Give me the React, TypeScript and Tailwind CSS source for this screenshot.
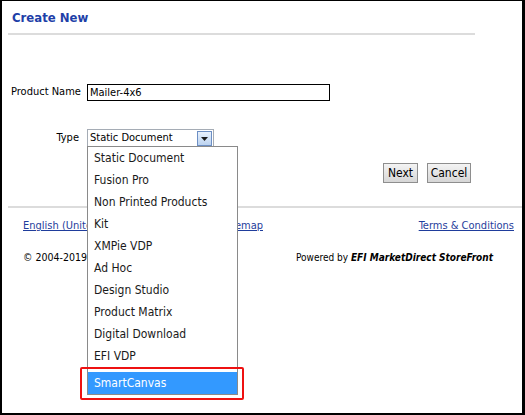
import React from "react";

const F = { fontFamily: '"DejaVu Sans Condensed", "DejaVu Sans", Tahoma, sans-serif' };

const items = [
  "Static Document",
  "Fusion Pro",
  "Non Printed Products",
  "Kit",
  "XMPie VDP",
  "Ad Hoc",
  "Design Studio",
  "Product Matrix",
  "Digital Download",
  "EFI VDP",
];

export default function App() {
  return (
    <div
      className="relative w-[525px] h-[415px] box-border bg-white border-black border-t border-l-2 border-r-[3px] border-b-2 text-black overflow-hidden font-stretch-semi-condensed"
      style={F}
    >
      <div className="pl-[10px] pt-[9px] text-[13px] leading-[16px] font-bold text-[#1e3fa8]">Create New</div>
      <div className="ml-[6px] mt-[7px] w-[467px] h-[2px] bg-[#dcdcdc]" />

      <div className="mt-[49px] flex items-center h-[17px]">
        <div className="w-[85px] pl-[9px] text-[11px]">Product Name</div>
        <div className="w-[243px] h-[17px] border border-black box-border pl-[2px] text-[11px] leading-[15px]">Mailer-4x6</div>
      </div>

      <div className="mt-[28px] flex items-center h-[19px]">
        <div className="w-[85px] pr-[8px] text-right text-[11px]">Type</div>
        <div className="w-[127px] h-[19px] border border-[#a5acb5] box-border flex items-center justify-between pl-[2px] text-[11px]">
          <span>Static Document</span>
          <span className="w-[15px] h-[15px] mr-[1px] border border-[#6d8fc4] bg-gradient-to-b from-[#e8f1fc] to-[#bcd3f0] flex items-center justify-center box-border">
            <svg width="7" height="4" viewBox="0 0 7 4"><path d="M0 0h7L3.5 4z" fill="#1a1a1a" /></svg>
          </span>
        </div>
      </div>

      <div className="mt-[15px] flex justify-end pr-[51px] gap-[9px] h-[20px]">
        <button className="w-[35px] h-[20px] border border-[#8e8e8e] bg-gradient-to-b from-[#f4f4f4] to-[#d6d6d6] text-[12px] leading-[18px]">Next</button>
        <button className="w-[44px] h-[20px] border border-[#8e8e8e] bg-gradient-to-b from-[#f4f4f4] to-[#d6d6d6] text-[12px] leading-[18px]">Cancel</button>
      </div>

      <div className="ml-[6px] mt-[23px] h-[2px] bg-[#dcdcdc]" />

      <div className="mt-[10px] flex items-center pl-[21px] pr-[8px] text-[11px] text-[#1f3d9c]">
        <div className="w-[64px] overflow-hidden whitespace-nowrap">
          <span className="underline">English (United States)</span>
        </div>
        <div className="ml-[150px] w-[26px] overflow-hidden whitespace-nowrap flex justify-end">
          <span className="underline">Sitemap</span>
        </div>
        <span className="ml-auto underline">Terms &amp; Conditions</span>
      </div>

      <div className="mt-[15px] flex items-center pl-[21px]">
        <div className="w-[64px] overflow-hidden whitespace-nowrap text-[10.5px]">
          <span>© 2004-2019 EFI. All rights reserved.</span>
        </div>
        <span className="ml-[209px] text-[10px]">
          Powered by <b className="italic">EFI MarketDirect StoreFront</b>
        </span>
      </div>

      <div className="absolute left-[85px] top-[145px] w-[151px] h-[249px] border border-[#8a8a8a] bg-white box-border">
        {items.map((t) => (
          <div key={t} className="h-[22px] pl-[6px] flex items-center text-[12px] text-[#1a1a1a]">
            {t}
          </div>
        ))}
        <div className="mt-[5px] h-[22px] pl-[6px] flex items-center text-[12px] text-white bg-[#3399ff]">SmartCanvas</div>
      </div>
      <div className="absolute left-[78px] top-[366px] w-[164px] h-[33px] border-2 border-[#ee1111] rounded-[2px]" />
    </div>
  );
}
